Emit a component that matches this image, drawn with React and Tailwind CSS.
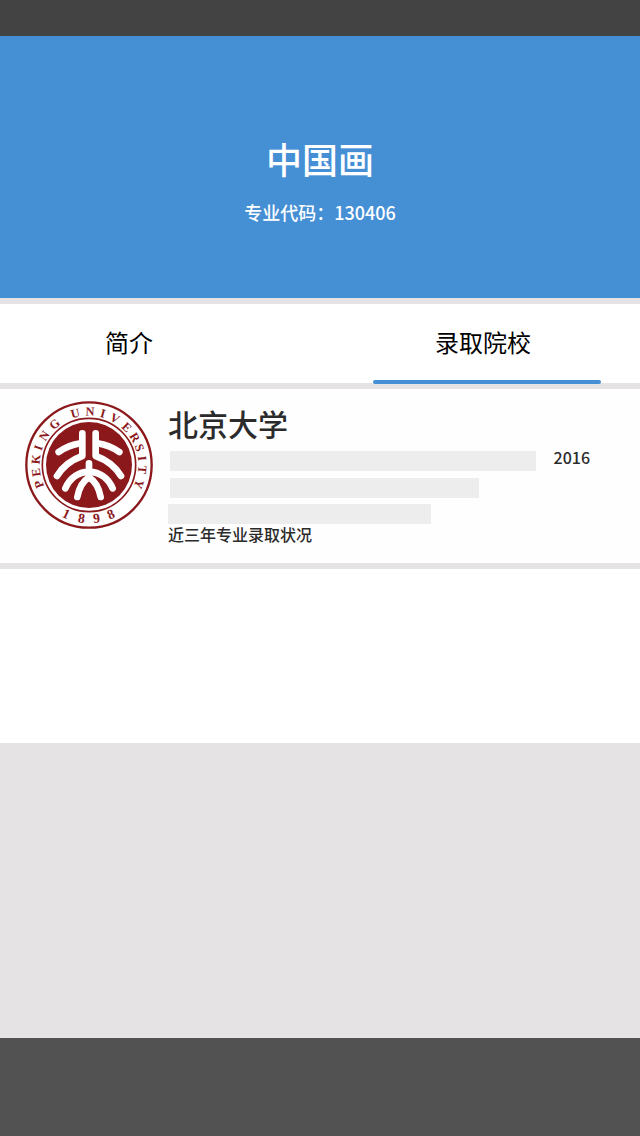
import React from "react";

const RING_LETTERS = [
  ["P", -111], ["E", -98], ["K", -84], ["I", -71], ["N", -57], ["G", -40],
  ["U", -15], ["N", 1], ["I", 15], ["V", 29], ["E", 45], ["R", 59],
  ["S", 71], ["I", 83], ["T", 95], ["Y", 111],
];

const RING_DIGITS = [["1", 25], ["8", 8], ["9", -8], ["8", -24]];

function UniversitySeal() {
  return (
    <svg
      viewBox="15 15 384 384"
      className="size-32 shrink-0"
      role="img"
      aria-label="PEKING UNIVERSITY 1898"
    >
      <circle cx="207" cy="207" r="188" fill="#fff" stroke="#8b181b" strokeWidth="7" />
      <circle cx="207" cy="207" r="140" fill="none" stroke="#8b181b" strokeWidth="5" />
      <circle cx="207" cy="207" r="129" fill="#8b181b" />
      <g fill="none" stroke="#fff" strokeWidth="20" strokeLinecap="round" strokeLinejoin="round">
        <path d="M187 112V180Q136 198 111 240M116 168Q145 148 182 142" />
        <path d="M227 112V180Q278 198 303 240M298 168Q269 148 232 142" />
        <path d="M207 202V244M136 277Q157 230 207 227Q257 230 278 277" />
        <path d="M172 303Q180 260 207 244Q234 260 242 303" />
      </g>
      <g
        fill="#8b181b"
        fontFamily="'Liberation Serif', serif"
        fontWeight="700"
        fontSize="37"
        textAnchor="middle"
      >
        {RING_LETTERS.map(([char, angle], i) => (
          <text key={i} x="207" y="59" transform={`rotate(${angle} 207 207)`}>
            {char}
          </text>
        ))}
        {RING_DIGITS.map(([char, angle], i) => (
          <text key={i} x="207" y="382" fontSize="41" transform={`rotate(${angle} 207 207)`}>
            {char}
          </text>
        ))}
      </g>
    </svg>
  );
}

export default function App() {
  return (
    <div className="flex min-h-screen flex-col bg-[#e5e3e4] font-['Noto_Sans_CJK_SC',sans-serif] text-[#2b2b2b]">
      <div className="h-9 bg-[#434343]" />

      <header className="flex h-[262px] flex-col items-center bg-[#458fd5] pt-24 text-white">
        <h1 className="text-4xl leading-[52px] font-medium">中国画</h1>
        <p className="mt-4 text-lg leading-6 font-medium">专业代码：130406</p>
      </header>

      <nav className="mt-1.5 flex h-[79px] justify-between bg-white pr-[39px] pl-[15px] text-2xl text-black" role="tablist">
        <button type="button" role="tab" aria-selected="false" className="w-[228px] pb-1">
          简介
        </button>
        <button type="button" role="tab" aria-selected="true" className="relative w-[228px] pr-2 pb-1">
          录取院校
          <span className="absolute inset-x-0 -bottom-px h-1 rounded-full bg-[#458fd5]" />
        </button>
      </nav>

      <main className="mt-1.5">
        <article className="flex h-[174px] bg-[#fefefe] pt-3 pr-[50px] pl-[25px] font-medium">
          <UniversitySeal />
          <div className="ml-[15px] min-w-0 flex-1">
            <h2 className="pt-1 text-3xl leading-9 font-medium">北京大学</h2>
            <div className="mt-2.5 ml-0.5 flex items-start justify-between">
              <div className="h-5 w-[366px] bg-[#ededed]" />
              <span className="-mt-0.5 text-base leading-4">2016</span>
            </div>
            <div className="mt-[7px] ml-0.5 h-5 w-[309px] bg-[#ededed]" />
            <div className="mt-1.5 h-5 w-[263px] bg-[#ededed]" />
            <p className="text-base leading-5">近三年专业录取状况</p>
          </div>
        </article>
        <div className="mt-1.5 h-[174px] bg-white" />
      </main>

      <footer className="mt-auto h-[98px] bg-[#525252]" />
    </div>
  );
}
